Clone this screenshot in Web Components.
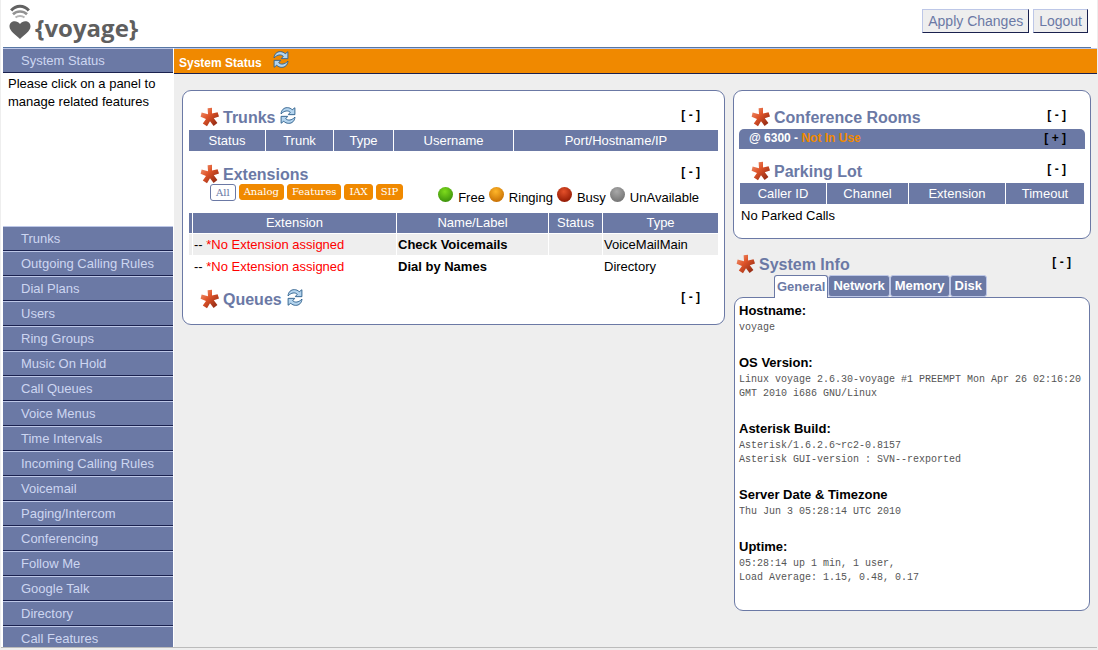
<!DOCTYPE html>
<html lang="en">
<head>
<meta charset="utf-8">
<title>Voyage - System Status</title>
<style>
html, body { height: 100%; }
body { margin: 0; background: #eee; color: #000; overflow: hidden; font: 13px/18px "Liberation Sans", Arial, sans-serif; --blue: #6b79a5; --pale: #bdc7e7; --navy: #1a214e; --orange: #f08900; }
</style>
</head>
<body>
<voyage-app></voyage-app>
<script>
function define(name, html, setup) {
  const t = document.createElement('template');
  t.innerHTML = html;
  customElements.define(name, class extends HTMLElement {
    connectedCallback() {
      if (this.shadowRoot) return;
      this.attachShadow({ mode: 'open' }).append(t.content.cloneNode(true));
      if (setup) setup(this, this.shadowRoot);
    }
  });
}

define('star-icon', `
<style>:host { display: block; width: 20px; height: 20px; flex: none; } svg { display: block; }</style>
<svg width="20" height="20" viewBox="0 0 20 20" aria-hidden="true">
<defs><linearGradient id="g" x1="0" y1="0" x2="1" y2="1"><stop offset="0" stop-color="#f0a080"/><stop offset=".42" stop-color="#e0552a"/><stop offset="1" stop-color="#80200e"/></linearGradient></defs>
<path fill="url(#g)" d="M7.600 1.300 12 .8 12 6.600 17.600 5.200 19 9.400 13.800 11.200 17.400 16 13.600 18.900 10 14.200 7 19.200 2.800 16.600 6 12 .6 9.800 1.600 5.600 8 7.200Z"/>
</svg>`);

define('refresh-button', `
<style>
:host { display: block; flex: none; }
button { display: block; border: 0; padding: 0; background: none; }
svg { display: block; }
</style>
<button type="button" aria-label="Refresh"><svg width="16" height="17" viewBox="0 0 16 16" preserveAspectRatio="none">
<g fill="#b4d4ee" stroke="#2f608c" stroke-width=".9" stroke-linejoin="round">
<path d="M1 6.500C1.500 2.500 4 .6 7.300 .6 9.400 .6 11 1.400 12.200 2.600L14.900 .7V7.200H8.300L10.300 4.900C8 3 4.500 3.200 1 6.500Z"/>
<path d="M15 9.500C14.500 13.500 12 15.400 8.700 15.400 6.600 15.400 5 14.600 3.800 13.400L1.100 15.300V8.800H7.700L5.700 11.100C8 13 11.500 12.800 15 9.500Z"/>
</g></svg></button>`);

define('toggle-button', `
<style>
:host { display: block; flex: none; }
button { display: block; border: 0; padding: 0; background: none; color: #000; font: bold 12px/16px "Liberation Sans", Arial, sans-serif; }
</style>
<button type="button"><slot></slot></button>`);

define('panel-heading', `
<style>
:host { display: flex; align-items: flex-start; height: 20px; padding: 0 18px 0 11px; }
h2 { margin: 0 5px 0 3px; font: bold 16px/22px "Liberation Sans", Arial, sans-serif; color: var(--blue); }
toggle-button { margin-left: auto; }
</style>
<star-icon></star-icon><h2><slot></slot></h2><slot name="action"></slot><toggle-button>[ - ]</toggle-button>`);

define('panel-card', `
<style>
:host { display: block; background: #fff; border: 1px solid var(--blue); border-radius: 9px; padding: 16px 6px 0; box-sizing: border-box; }
</style><slot></slot>`);

define('voyage-header', `
<style>
:host { display: flex; justify-content: space-between; height: 47px; background: #fff; border-bottom: 1px solid #5877a4; margin-right: 6px; flex: none; }
.logo { display: flex; padding-left: 5px; color: #5f5f5f; }
svg { display: block; margin: 4px 2px 0 0; }
.name { font: bold 24px/32px "Open Sans", sans-serif; padding-top: 12px; }
.actions { display: flex; gap: 4px; padding: 9px 3px 0 0; align-items: flex-start; }
button { height: 24px; padding: 0 5px; background: #eee; border: 1px solid; border-color: var(--pale) var(--navy) var(--navy) var(--pale); color: var(--blue); font: 14px/22px "Liberation Sans", Arial, sans-serif; }
</style>
<div class="logo"><svg width="25" height="37" viewBox="0 0 25 37" aria-hidden="true">
<path d="M3.200 6.500C8 .9 16 .9 20.800 6.500" fill="none" stroke="#626262" stroke-width="3"/>
<path d="M5 10.300C9 6.500 15 6.500 19 10.300" fill="none" stroke="#929292" stroke-width="2.600"/>
<path d="M7.500 13.600C10 11.500 14 11.500 16.500 13.600" fill="none" stroke="#b5b5b5" stroke-width="2"/>
<path d="M12 35C8 31 1.500 27 1.500 22.500 1.500 17 8.500 15.500 12 20 15.500 15.500 22.500 17 22.500 22.500 22.500 27 16 31 12 35Z" fill="#5f5f5f"/></svg>
<span class="name">{voyage}</span></div>
<div class="actions"><button type="button">Apply Changes</button><button type="button">Logout</button></div>`);

define('nav-item', `
<style>
:host { display: block; flex: none; }
a { display: block; height: 23px; padding-left: 18px; background: var(--blue); border-top: 1px solid var(--pale); border-bottom: 1px solid var(--navy); color: #cdd6f1; text-decoration: none; font-size: 13px; line-height: 23px; }
</style><a href="#"><slot></slot></a>`);

define('side-nav', `
<style>
:host { display: flex; flex-direction: column; width: 170px; flex: none; background: #fff; border-right: 1px solid #fff; overflow: hidden; }
p { margin: 0; padding: 2px 5px; height: 149px; flex: none; }
</style>
<nav-item>System Status</nav-item><p>Please click on a panel to manage related features</p><nav></nav>`, (el, root) => {
  for (const n of ['Trunks', 'Outgoing Calling Rules', 'Dial Plans', 'Users', 'Ring Groups', 'Music On Hold', 'Call Queues', 'Voice Menus', 'Time Intervals', 'Incoming Calling Rules', 'Voicemail', 'Paging/Intercom', 'Conferencing', 'Follow Me', 'Google Talk', 'Directory', 'Call Features']) {
    const i = document.createElement('nav-item');
    i.textContent = n;
    root.querySelector('nav').append(i);
  }
});

const tableCss = `
table { width: 100%; table-layout: fixed; border-collapse: separate; border-spacing: 0; }
th { height: 21px; padding: 0; background: var(--blue); color: #fff; font-weight: normal; line-height: 20px; border-right: 1px solid #fff; }
th:last-child, td:last-child { border-right: 0; }
td { padding: 0 1px; height: 21px; line-height: 20px; border-right: 1px solid #fff; }`;

define('trunk-table', `
<style>:host { display: block; margin: 3px 0 13px; } ${tableCss}</style>
<table><colgroup><col style="width:77px"><col style="width:68px"><col style="width:60px"><col style="width:120px"><col></colgroup>
<tr><th>Status</th><th>Trunk</th><th>Type</th><th>Username</th><th>Port/Hostname/IP</th></tr></table>`);

define('extension-filter', `
<style>
:host { display: flex; align-items: flex-start; padding: 0 19px 0 21px; height: 29px; }
.pills { display: flex; gap: 3px; margin-right: auto; }
button { height: 16px; box-sizing: border-box; padding: 0 4px; border: 1px solid var(--orange); border-radius: 3px; background: var(--orange); color: #fff; font: 10px/14px "DejaVu Serif", serif; }
button.on { height: 17px; padding: 0 5px; background: #fff; border-color: var(--blue); color: var(--blue); }
.legend { display: flex; gap: 4px; padding-top: 2px; }
.legend span { display: flex; gap: 5px; line-height: 23px; }
i { width: 15px; height: 15px; margin-top: 1px; border-radius: 50%; background: radial-gradient(circle at 45% 30%, var(--a), var(--b) 85%); }
</style>
<div class="pills"><button type="button" class="on">All</button><button type="button">Analog</button><button type="button">Features</button><button type="button">IAX</button><button type="button">SIP</button></div>
<div class="legend"><span><i style="--a:#7edb1c;--b:#378c0a"></i>Free</span><span><i style="--a:#ffb629;--b:#c36a00"></i>Ringing</span><span><i style="--a:#e4502a;--b:#8c1500"></i>Busy</span><span><i style="--a:#a8a8a8;--b:#707070"></i>UnAvailable</span></div>`);

define('extension-table', `
<style>:host { display: block; margin-bottom: 11px; } ${tableCss}
th { height: 20px; border-bottom: 1px solid #fff; }
td { border-bottom: 1px solid #fff; } .alt td { background: #eee; } .none { color: #f00; }</style>
<table><colgroup><col style="width:4px"><col style="width:204px"><col style="width:152px"><col style="width:54px"><col></colgroup>
<tr><th></th><th>Extension</th><th>Name/Label</th><th>Status</th><th>Type</th></tr>
<tr class="alt"><td></td><td>-- <span class="none">*No Extension assigned</span></td><td><b>Check Voicemails</b></td><td></td><td>VoiceMailMain</td></tr>
<tr><td></td><td>-- <span class="none">*No Extension assigned</span></td><td><b>Dial by Names</b></td><td></td><td>Directory</td></tr></table>`);

define('conference-room', `
<style>
:host { display: flex; justify-content: space-between; height: 20px; margin: 2px -1px 12px; padding: 0 19px 0 10px; background: var(--blue); border-radius: 5px 5px 0 0; color: #fff; font: bold 12px/18px "Liberation Sans", Arial, sans-serif; }
b { color: var(--orange); } toggle-button { padding-top: 1px; }
</style><span><slot></slot> - <b>Not In Use</b></span><toggle-button>[ + ]</toggle-button>`);

define('parking-table', `
<style>:host { display: block; margin-top: 2px; } ${tableCss}
td { height: 23px; line-height: 22px; }</style>
<table><colgroup><col style="width:87px"><col style="width:82px"><col style="width:97px"><col></colgroup>
<tr><th>Caller ID</th><th>Channel</th><th>Extension</th><th>Timeout</th></tr>
<tr><td colspan="4">No Parked Calls</td></tr></table>`);

define('info-tabs', `
<style>
:host { display: flex; position: relative; height: 23px; padding-left: 40px; margin-bottom: -1px; align-items: flex-start; }
button { height: 22px; box-sizing: border-box; padding: 0 4px; border: 1px solid var(--pale); border-radius: 3px; background: var(--blue); color: #fff; font: bold 13px/20px "Liberation Sans", Arial, sans-serif; }
button.on { height: 23px; padding: 0 2px; border-color: var(--blue); border-bottom: 0; border-radius: 3px 3px 0 0; background: #fff; color: var(--blue); line-height: 22px; }
</style>
<button type="button" class="on">General</button><button type="button">Network</button><button type="button">Memory</button><button type="button">Disk</button>`);

define('info-entry', `
<style>
:host { display: block; margin-bottom: 19px; }
h3 { margin: 0; font: bold 13px/18px "Liberation Sans", Arial, sans-serif; }
div { font: 10px/14px "Liberation Mono", monospace; color: #555; padding-top: 1px; }
</style><h3><slot name="title"></slot></h3><div><slot></slot></div>`);

define('system-info', `
<style>
:host { display: block; margin: 15px 1px 0; }
panel-heading { padding: 0 19px 0 2px; }
panel-card { padding: 4px 4px 6px; }
info-tabs { margin-top: 1px; }
</style>
<panel-heading>System Info</panel-heading><info-tabs></info-tabs>
<panel-card>
<info-entry><span slot="title">Hostname:</span>voyage</info-entry>
<info-entry><span slot="title">OS Version:</span>Linux voyage 2.6.30-voyage #1 PREEMPT Mon Apr 26 02:16:20 GMT 2010 i686 GNU/Linux</info-entry>
<info-entry><span slot="title">Asterisk Build:</span>Asterisk/1.6.2.6~rc2-0.8157<br>Asterisk GUI-version : SVN--rexported</info-entry>
<info-entry><span slot="title">Server Date &amp; Timezone</span>Thu Jun 3 05:28:14 UTC 2010</info-entry>
<info-entry><span slot="title">Uptime:</span>05:28:14 up 1 min, 1 user,<br>Load Average: 1.15, 0.48, 0.17</info-entry>
</panel-card>`);

define('status-page', `
<style>
:host { display: block; flex: 1; min-width: 0; background: #eee; }
header { display: flex; align-items: flex-start; gap: 11px; height: 24px; padding-left: 5px; background: var(--orange); border-top: 1px solid var(--pale); border-bottom: 1px solid var(--navy); }
h1 { margin: 0; color: #fff; font: bold 12px/28px "Liberation Sans", Arial, sans-serif; }
header refresh-button { padding-top: 2px; }
main { display: grid; grid-template-columns: minmax(0, 1fr) 358px; gap: 8px; padding: 16px 6px 0 8px; align-items: start; }
.left { padding-bottom: 15px; } .right { padding-bottom: 11px; }
</style>
<header><h1>System Status</h1><refresh-button></refresh-button></header>
<main>
<panel-card class="left">
<panel-heading>Trunks<refresh-button slot="action"></refresh-button></panel-heading>
<trunk-table></trunk-table>
<panel-heading>Extensions</panel-heading>
<extension-filter></extension-filter>
<extension-table></extension-table>
<panel-heading>Queues<refresh-button slot="action"></refresh-button></panel-heading>
</panel-card>
<div>
<panel-card class="right">
<panel-heading>Conference Rooms</panel-heading>
<conference-room>@ 6300</conference-room>
<panel-heading>Parking Lot</panel-heading>
<parking-table></parking-table>
</panel-card>
<system-info></system-info>
</div>
</main>`);

define('voyage-app', `
<style>
:host { display: flex; flex-direction: column; height: calc(100vh - 2px); margin: 0 1px; padding-left: 2px; background: #fff; border-bottom: 1px solid #bbb; box-sizing: border-box; }
.body { display: flex; flex: 1; min-height: 0; }
</style>
<voyage-header></voyage-header><div class="body"><side-nav></side-nav><status-page></status-page></div>`);
</script>
</body>
</html>
